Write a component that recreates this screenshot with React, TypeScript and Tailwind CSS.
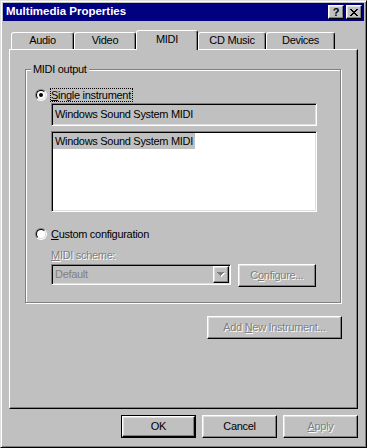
import React from "react";

const raised =
  "border border-t-white border-l-white border-r-black border-b-black shadow-[inset_-1px_-1px_0_#808080,inset_1px_1px_0_#dfdfdf]";
const sunken =
  "border border-t-[#808080] border-l-[#808080] border-r-white border-b-white shadow-[inset_1px_1px_0_#000,inset_-1px_-1px_0_#dfdfdf]";
const disabledText = "text-[#808080] [text-shadow:1px_1px_0_#fff]";

const tabs = [
  { label: "Audio", w: "w-[63px]" },
  { label: "Video", w: "w-[62px]" },
  { label: "MIDI", w: "w-[62px]", active: true },
  { label: "CD Music", w: "w-[68px]" },
  { label: "Devices", w: "w-[69px]" },
];

function Radio({ checked }: { checked?: boolean }) {
  return (
    <span className="flex h-[12px] w-[12px] shrink-0 rounded-full border border-t-[#808080] border-l-[#808080] border-r-white border-b-white">
      <span className="flex flex-1 items-center justify-center rounded-full border border-t-black border-l-black border-r-[#dfdfdf] border-b-[#dfdfdf] bg-white">
        {checked && <span className="h-[4px] w-[4px] rounded-full bg-black" />}
      </span>
    </span>
  );
}

function CloseGlyph() {
  // 8x7 pixel cross, like the Marlett close glyph
  const rows = [
    [0, 6],
    [1, 5],
    [2, 4],
    [3, 3],
    [2, 4],
    [1, 5],
    [0, 6],
  ];
  return (
    <svg width="8" height="7" viewBox="0 0 8 7" shapeRendering="crispEdges">
      {rows.map(([a, b], y) => (
        <g key={y}>
          <rect x={a} y={y} width="2" height="1" fill="#000" />
          {a !== b && <rect x={b} y={y} width="2" height="1" fill="#000" />}
        </g>
      ))}
    </svg>
  );
}

function ArrowDown() {
  return (
    <svg width="8" height="5" viewBox="0 0 8 5" shapeRendering="crispEdges">
      <rect x="1" y="1" width="7" height="1" fill="#fff" />
      <rect x="2" y="2" width="5" height="1" fill="#fff" />
      <rect x="3" y="3" width="3" height="1" fill="#fff" />
      <rect x="4" y="4" width="1" height="1" fill="#fff" />
      <rect x="0" y="0" width="7" height="1" fill="#808080" />
      <rect x="1" y="1" width="5" height="1" fill="#808080" />
      <rect x="2" y="2" width="3" height="1" fill="#808080" />
      <rect x="3" y="3" width="1" height="1" fill="#808080" />
    </svg>
  );
}

function Btn({
  children,
  className = "",
  disabled,
  isDefault,
}: {
  children: React.ReactNode;
  className?: string;
  disabled?: boolean;
  isDefault?: boolean;
}) {
  const inner = (
    <button
      className={`${raised} flex h-full w-full items-center justify-center bg-[#c0c0c0] ${
        disabled ? disabledText : "text-black"
      }`}
    >
      {children}
    </button>
  );
  if (isDefault) {
    return <div className={`border border-black ${className}`}>{inner}</div>;
  }
  return <div className={className}>{inner}</div>;
}

export default function App() {
  return (
    <div className="flex h-[448px] w-[367px] flex-col border border-t-[#dfdfdf] border-l-[#dfdfdf] border-r-black border-b-black bg-[#c0c0c0] p-[2px] font-['Liberation_Sans',Arial,sans-serif] text-[11px] tracking-[-0.3px] text-black shadow-[inset_1px_1px_0_#fff,inset_-1px_-1px_0_#808080]">
      {/* title bar */}
      <div className="flex h-[18px] shrink-0 items-center justify-between bg-[#000080] pl-[3px] pr-[2px]">
        <span className="text-[11.5px] font-bold tracking-normal text-white">Multimedia Properties</span>
        <div className="flex gap-[2px]">
          <button
            className={`${raised} flex h-[14px] w-[16px] items-center justify-center bg-[#c0c0c0] text-[11px] font-bold leading-none tracking-normal`}
          >
            ?
          </button>
          <button className={`${raised} flex h-[14px] w-[16px] items-center justify-center bg-[#c0c0c0]`}>
            <CloseGlyph />
          </button>
        </div>
      </div>

      <div className="flex flex-1 flex-col px-[6px] pt-[9px]">
        {/* tabs */}
        <div className="flex h-[19px] items-end pl-[2px]">
          {tabs.map((t) => (
            <div
              key={t.label}
              className={`${t.w} flex justify-center rounded-t-[3px] border-l border-t border-r border-l-white border-t-white border-r-black bg-[#c0c0c0] leading-[13px] shadow-[inset_-1px_0_0_#808080] ${
                t.active ? "relative z-10 mb-[-1px] h-[20px] pt-[2px]" : "h-[17px] pt-[1px]"
              }`}
            >
              {t.label}
            </div>
          ))}
        </div>

        {/* tab page */}
        <div className="h-[360px] border border-t-white border-l-white border-r-black border-b-black pl-[15px] pt-[19px] shadow-[inset_-1px_-1px_0_#808080]">
          <div className="flex w-[317px] flex-col">
            {/* group box */}
            <div className="relative flex h-[234px] w-[316px] flex-col border border-[#808080] pl-[9px] pt-[18px] shadow-[inset_1px_1px_0_#fff,1px_1px_0_#fff]">
              <span className="absolute left-[5px] top-[-7px] bg-[#c0c0c0] px-[2px] leading-[13px]">MIDI output</span>

              <div className="flex h-[14px] items-center">
                <Radio checked />
                <span className="ml-[3px] h-[14px] border border-dotted border-black pr-[1px] leading-[12px]">
                  <span className="underline">S</span>ingle instrument
                </span>
              </div>

              <div className="flex flex-col pl-[16px]">
                <div className={`${sunken} mt-[1px] flex h-[23px] w-[266px] items-center pl-[3px]`}>
                  Windows Sound System MIDI
                </div>
                <div className={`${sunken} mt-[5px] h-[81px] w-[266px] bg-white p-[1px]`}>
                  <span className="inline-flex h-[16px] items-center bg-[#c0c0c0] px-[2px]">
                    Windows Sound System MIDI
                  </span>
                </div>
              </div>

              <div className="mt-[15px] flex h-[14px] items-center">
                <Radio />
                <span className="ml-[4px] leading-[14px]">
                  <span className="underline">C</span>ustom configuration
                </span>
              </div>

              <div className="flex flex-col pl-[16px]">
                <span className={`${disabledText} mt-[8px] leading-[13px]`}>
                  <span className="underline">M</span>IDI scheme:
                </span>
                <div className="mt-[2px] flex items-start gap-[7px]">
                  <div className={`${sunken} flex h-[21px] w-[180px] p-[1px]`}>
                    <span className="flex flex-1 items-center pl-[2px] text-[#808080]">Default</span>
                    <div className={`${raised} flex h-[17px] w-[16px] items-center justify-center bg-[#c0c0c0]`}>
                      <ArrowDown />
                    </div>
                  </div>
                  <Btn disabled className="h-[23px] w-[78px]">
                    C<span className="underline">o</span>nfigure...
                  </Btn>
                </div>
              </div>
            </div>

            <Btn disabled className="mt-[13px] h-[23px] w-[135px] self-end">
              <span className="whitespace-pre">
                Add <span className="underline">N</span>ew Instrument...
              </span>
            </Btn>
          </div>
        </div>

        {/* dialog buttons */}
        <div className="mt-[6px] flex justify-end gap-[6px]">
          <Btn isDefault className="h-[23px] w-[75px]">
            OK
          </Btn>
          <Btn className="h-[23px] w-[75px]">Cancel</Btn>
          <Btn disabled className="h-[23px] w-[75px]">
            <span className="underline">A</span>pply
          </Btn>
        </div>
      </div>
    </div>
  );
}
